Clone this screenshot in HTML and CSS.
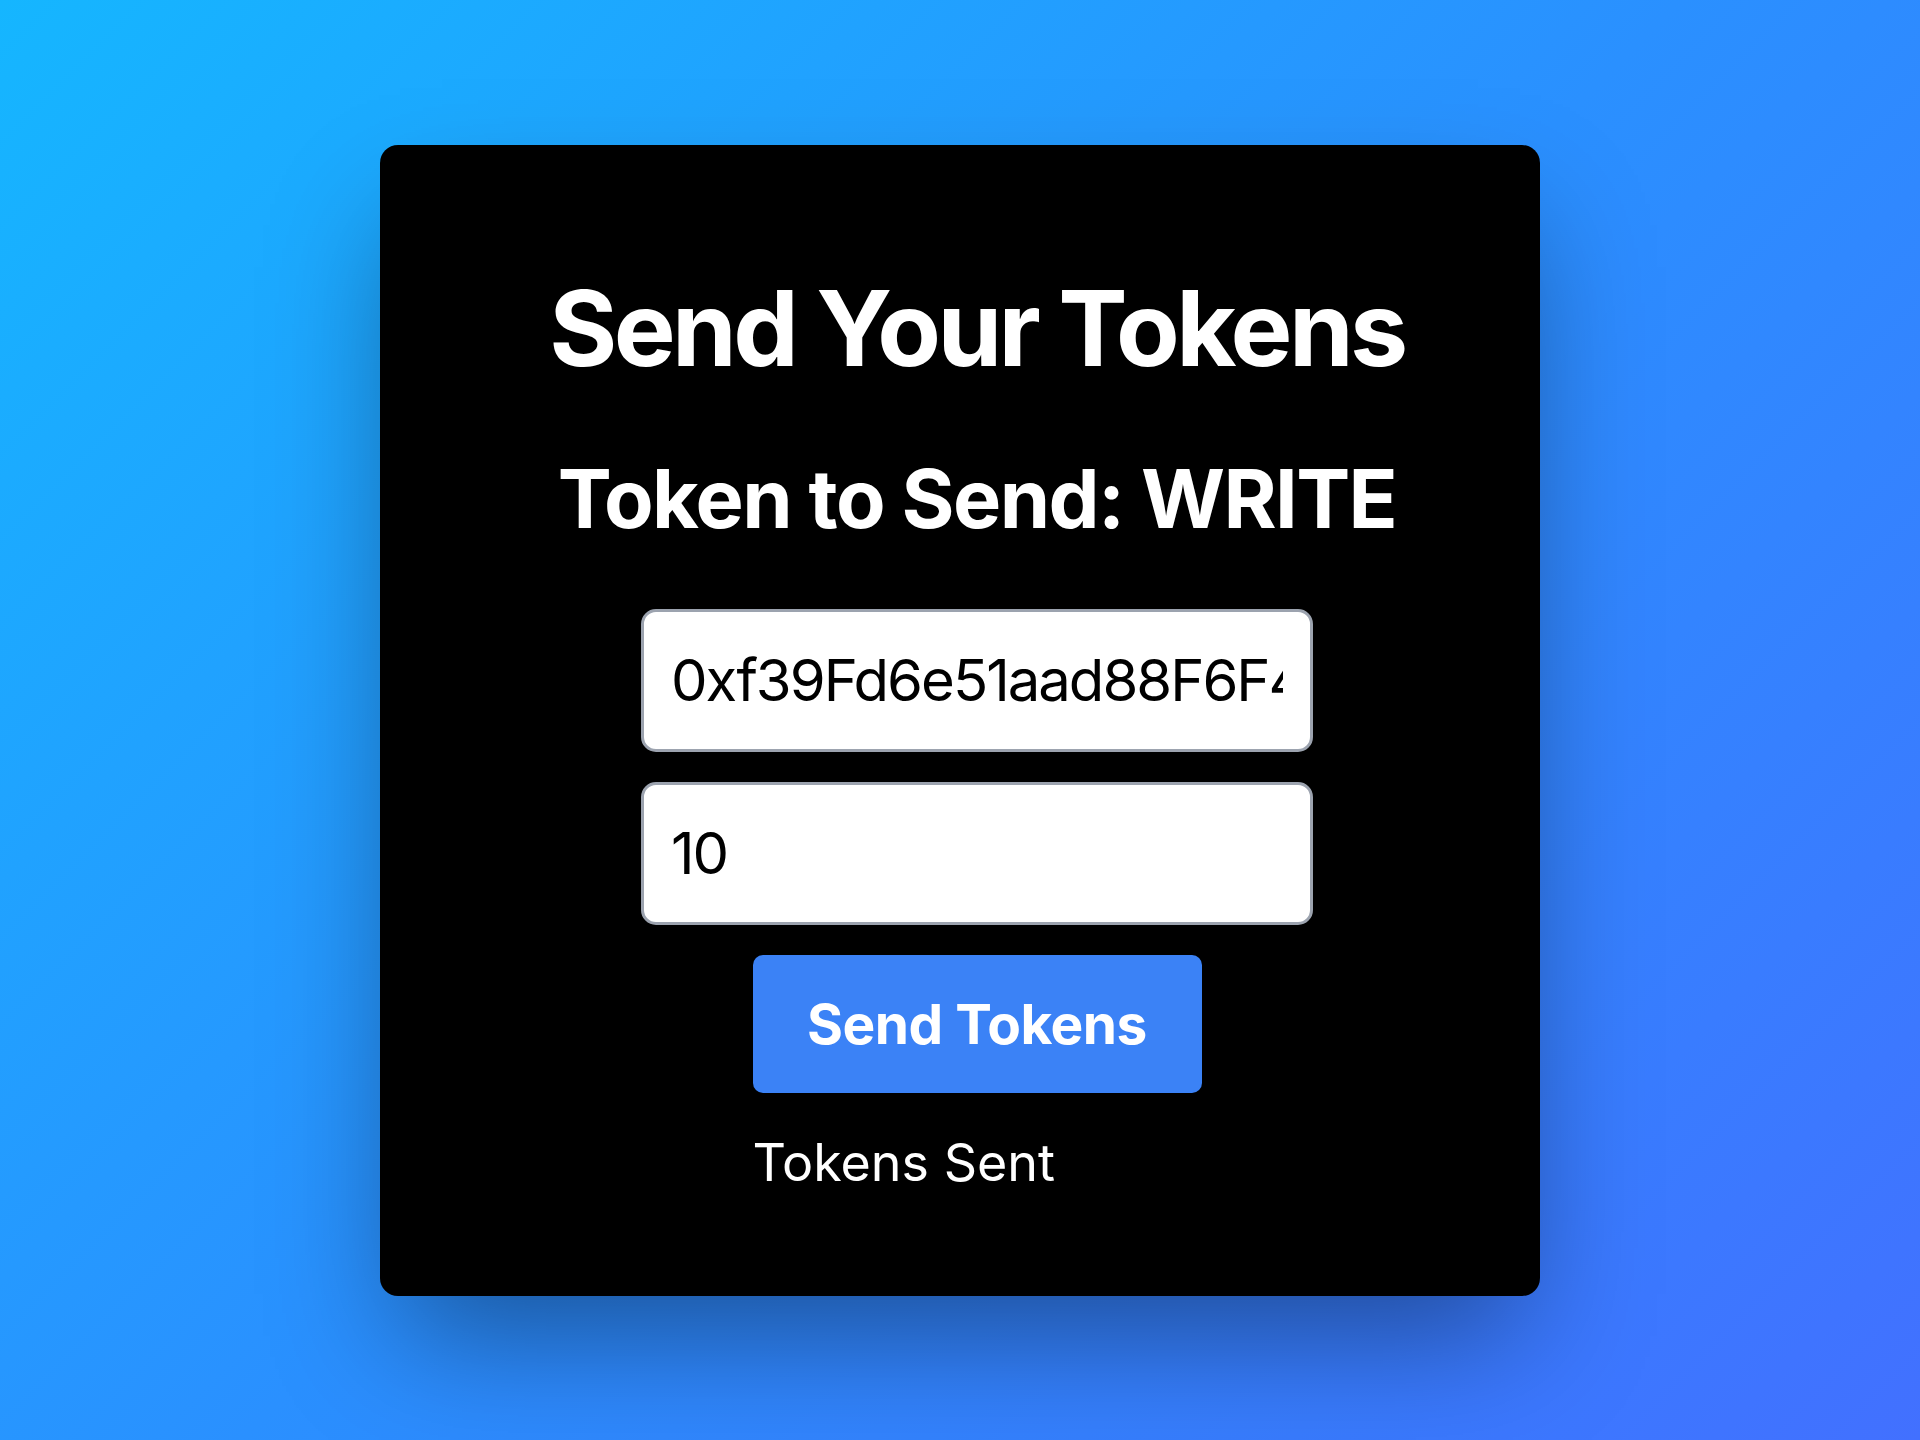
FILE: index.html
```html
<!DOCTYPE html>
<html lang="en">
<head>
<meta charset="utf-8">
<title>Send Your Tokens</title>
<link rel="stylesheet" href="styles.css">
</head>
<body>
  <main class="stage">
    <section class="card">
      <div class="content">
        <h1 class="title">Send Your Tokens</h1>
        <h2 class="subtitle">Token to Send: WRITE</h2>
        <form class="form">
          <input class="field" type="text" value="0xf39Fd6e51aad88F6F4ce6aB8827279cffFb92266">
          <input class="field" type="text" value="10">
          <button class="send" type="button">Send Tokens</button>
          <div class="status-wrap">
            <p class="status">Tokens Sent</p>
          </div>
        </form>
      </div>
    </section>
  </main>
</body>
</html>
```

FILE: styles.css
```css
* {
  box-sizing: border-box;
}

html, body {
  margin: 0;
  padding: 0;
}

body {
  font-family: Inter, "Noto Sans", "Liberation Sans", sans-serif;
  background: linear-gradient(135deg, #15b6ff 0%, #2a90ff 50%, #4270ff 100%);
  min-height: 1440px;
}

.stage {
  min-height: 1440px;
  display: flex;
  align-items: center;
  justify-content: center;
}

.card {
  width: 1160px;
  height: 1151px;
  background: #000;
  border-radius: 18px;
  padding: 123px 0 0 34px;
  box-shadow: 0 60px 120px -20px rgba(0, 0, 0, 0.4);
}

.content {
  display: flex;
  flex-direction: column;
  align-items: center;
  text-align: center;
  color: #fff;
}

.title {
  margin: 0;
  font-size: 104px;
  line-height: 120px;
  font-weight: 700;
  letter-spacing: -3.6px;
}

.subtitle {
  margin: 61px 0 0;
  font-size: 81px;
  line-height: 100px;
  font-weight: 700;
  letter-spacing: -1.6px;
}

.form {
  margin-top: 60px;
  display: flex;
  flex-direction: column;
  align-items: center;
  gap: 30px;
}

.field {
  width: 672px;
  height: 143px;
  border: 3px solid #9ca3af;
  border-radius: 15px;
  background: #fff;
  padding: 0 27px;
  font-family: Inter, "Noto Sans", sans-serif;
  font-size: 58px;
  letter-spacing: -2px;
  color: #000;
  outline: none;
}

.send {
  width: 449px;
  height: 138px;
  border: none;
  border-radius: 10px;
  background: #3b82f6;
  color: #fff;
  font-family: Inter, "Noto Sans", sans-serif;
  font-size: 55px;
  font-weight: 700;
  letter-spacing: -0.5px;
  padding: 0;
}

.status-wrap {
  width: 449px;
  margin-top: 8px;
  text-align: left;
}

.status {
  margin: 0;
  font-size: 52px;
  line-height: 64px;
  font-weight: 400;
  color: #fff;
}
```
